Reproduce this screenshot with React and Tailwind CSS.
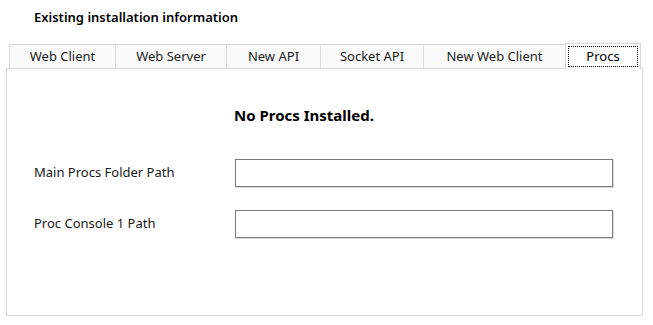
import React from "react";

const tabs = [
  { label: "Web Client", w: "w-[106px]" },
  { label: "Web Server", w: "w-[111px]" },
  { label: "New API", w: "w-[94px]" },
  { label: "Socket API", w: "w-[103px]" },
  { label: "New Web Client", w: "w-[142px]" },
];

function Field({ label }) {
  return (
    <div className="flex items-center">
      <div className="w-[201px] text-[13px] text-[#1a1a1a]">{label}</div>
      <div className="w-[378px] h-[28px] bg-white border border-[#7a7a7a] shadow-[1px_1px_0_#dcdcdc]" />
    </div>
  );
}

export default function App() {
  return (
    <div
      className="w-[653px] h-[325px] bg-white text-black"
      style={{ fontFamily: '"Segoe UI", "Noto Sans", "Open Sans", sans-serif' }}
    >
      <div className="pl-[34px] pt-[8px] text-[13px] font-semibold leading-[19px]">
        Existing installation information
      </div>

      {/* Tab strip */}
      <div className="mt-[16px] pl-[9px] flex items-end">
        {tabs.map((t) => (
          <div
            key={t.label}
            className={`${t.w} h-[24px] flex items-center justify-center border-t border-l border-[#d9d9d9] bg-[#fafafa] text-[13px] text-[#1a1a1a] last:border-r`}
          >
            {t.label}
          </div>
        ))}
        <div className="relative z-10 -mb-px w-[76px] h-[26px] p-[2px] bg-white border border-b-0 border-[#d9d9d9]">
          <div className="h-full flex items-center justify-center border border-dotted border-black text-[13px]">
            Procs
          </div>
        </div>
      </div>

      {/* Panel */}
      <div className="mx-[6px] w-[637px] h-[248px] border border-[#d9d9d9] bg-white">
        <div className="pt-[36px] pl-[227px] text-[15px] font-bold leading-[21px]">
          No Procs Installed.
        </div>
        <div className="pl-[27px] pt-[33px] flex flex-col gap-[23px]">
          <Field label="Main Procs Folder Path" />
          <Field label="Proc Console 1 Path" />
        </div>
      </div>
    </div>
  );
}
